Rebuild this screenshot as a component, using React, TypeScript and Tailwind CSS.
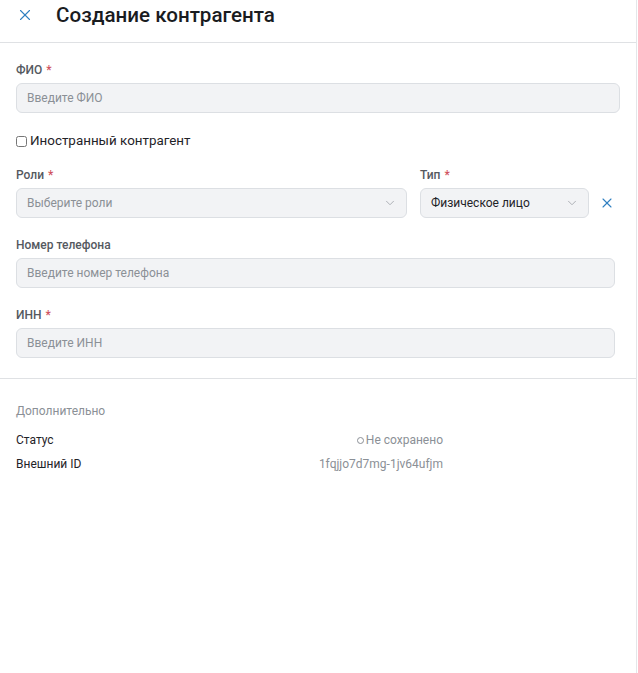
import { X, ChevronDown } from 'lucide-react'

const font = { fontFamily: 'Roboto, "Noto Sans", sans-serif' }

function Label({ text, required }: { text: string; required?: boolean }) {
  return (
    <div className="h-4 text-[12px] leading-4 font-medium text-[#55595f] mb-[5px]">
      {text}
      {required && <span className="text-[#d0535e] ml-1">*</span>}
    </div>
  )
}

function TextInput({ placeholder }: { placeholder: string }) {
  return (
    <div className="h-[30px] rounded-md border border-[#dcdfe3] bg-[#f2f3f5] flex items-center px-[10px] text-[12px] text-[#8b9096]">
      {placeholder}
    </div>
  )
}

function Select({ value, placeholder }: { value?: string; placeholder?: string }) {
  return (
    <div className="h-[30px] rounded-md border border-[#dcdfe3] bg-[#f2f3f5] flex items-center justify-between pl-[10px] pr-[9px] text-[12px]">
      <span className={value ? 'text-[#1f2328]' : 'text-[#8b9096]'}>{value ?? placeholder}</span>
      <ChevronDown size={14} strokeWidth={1.5} className="text-[#a3a7ad]" />
    </div>
  )
}

export default function App() {
  return (
    <div style={font} className="w-[637px] h-[673px] bg-white border-r border-[#e4e6e9]">
      <div className="h-[43px] border-b border-[#dfe1e4]">
        <div className="h-[30px] flex items-center">
          <button className="w-[50px] flex justify-center text-[#2f7fc1]">
            <X size={18} strokeWidth={1.5} />
          </button>
          <h1 className="text-[20.6px] leading-[24px] font-medium text-[#1a1c1f] ml-[6px]">Создание контрагента</h1>
        </div>
      </div>

      <div className="px-4 pt-[19px]">
        <Label text="ФИО" required />
        <TextInput placeholder="Введите ФИО" />

        <label className="flex items-center gap-[3px] mt-[21px] h-[14px] text-[13.4px] text-[#1f2328]">
          <input type="checkbox" className="w-[11px] h-[11px] m-0" />
          Иностранный контрагент
        </label>

        <div className="flex items-end mt-[19px]">
          <div className="w-[391px] shrink-0">
            <Label text="Роли" required />
            <Select placeholder="Выберите роли" />
          </div>
          <div className="w-[169px] shrink-0 ml-[13px]">
            <Label text="Тип" required />
            <Select value="Физическое лицо" />
          </div>
          <div className="h-[30px] flex items-center pl-[10px] text-[#2f7fc1] shrink-0">
            <X size={16} strokeWidth={1.6} />
          </div>
        </div>

        <div className="mt-[19px] mr-[5px]">
          <Label text="Номер телефона" />
          <TextInput placeholder="Введите номер телефона" />
        </div>

        <div className="mt-[19px] mr-[5px]">
          <Label text="ИНН" required />
          <TextInput placeholder="Введите ИНН" />
        </div>
      </div>

      <div className="mt-[20px] border-t border-[#dfe1e4]" />

      <div className="px-4 pt-[24px] w-[459px] text-[12px]">
        <div className="text-[#8b9096] leading-4">Дополнительно</div>
        <div className="flex justify-between mt-[13px] leading-4">
          <span className="text-[#1f2328]">Статус</span>
          <span className="text-[#8b9096] flex items-center gap-[2px]">
            <span className="w-[7px] h-[7px] rounded-full border border-[#8b9096]" />
            Не сохранено
          </span>
        </div>
        <div className="flex justify-between mt-[8px] leading-4">
          <span className="text-[#1f2328]">Внешний ID</span>
          <span className="text-[#8b9096]">1fqjjo7d7mg-1jv64ufjm</span>
        </div>
      </div>
    </div>
  )
}
